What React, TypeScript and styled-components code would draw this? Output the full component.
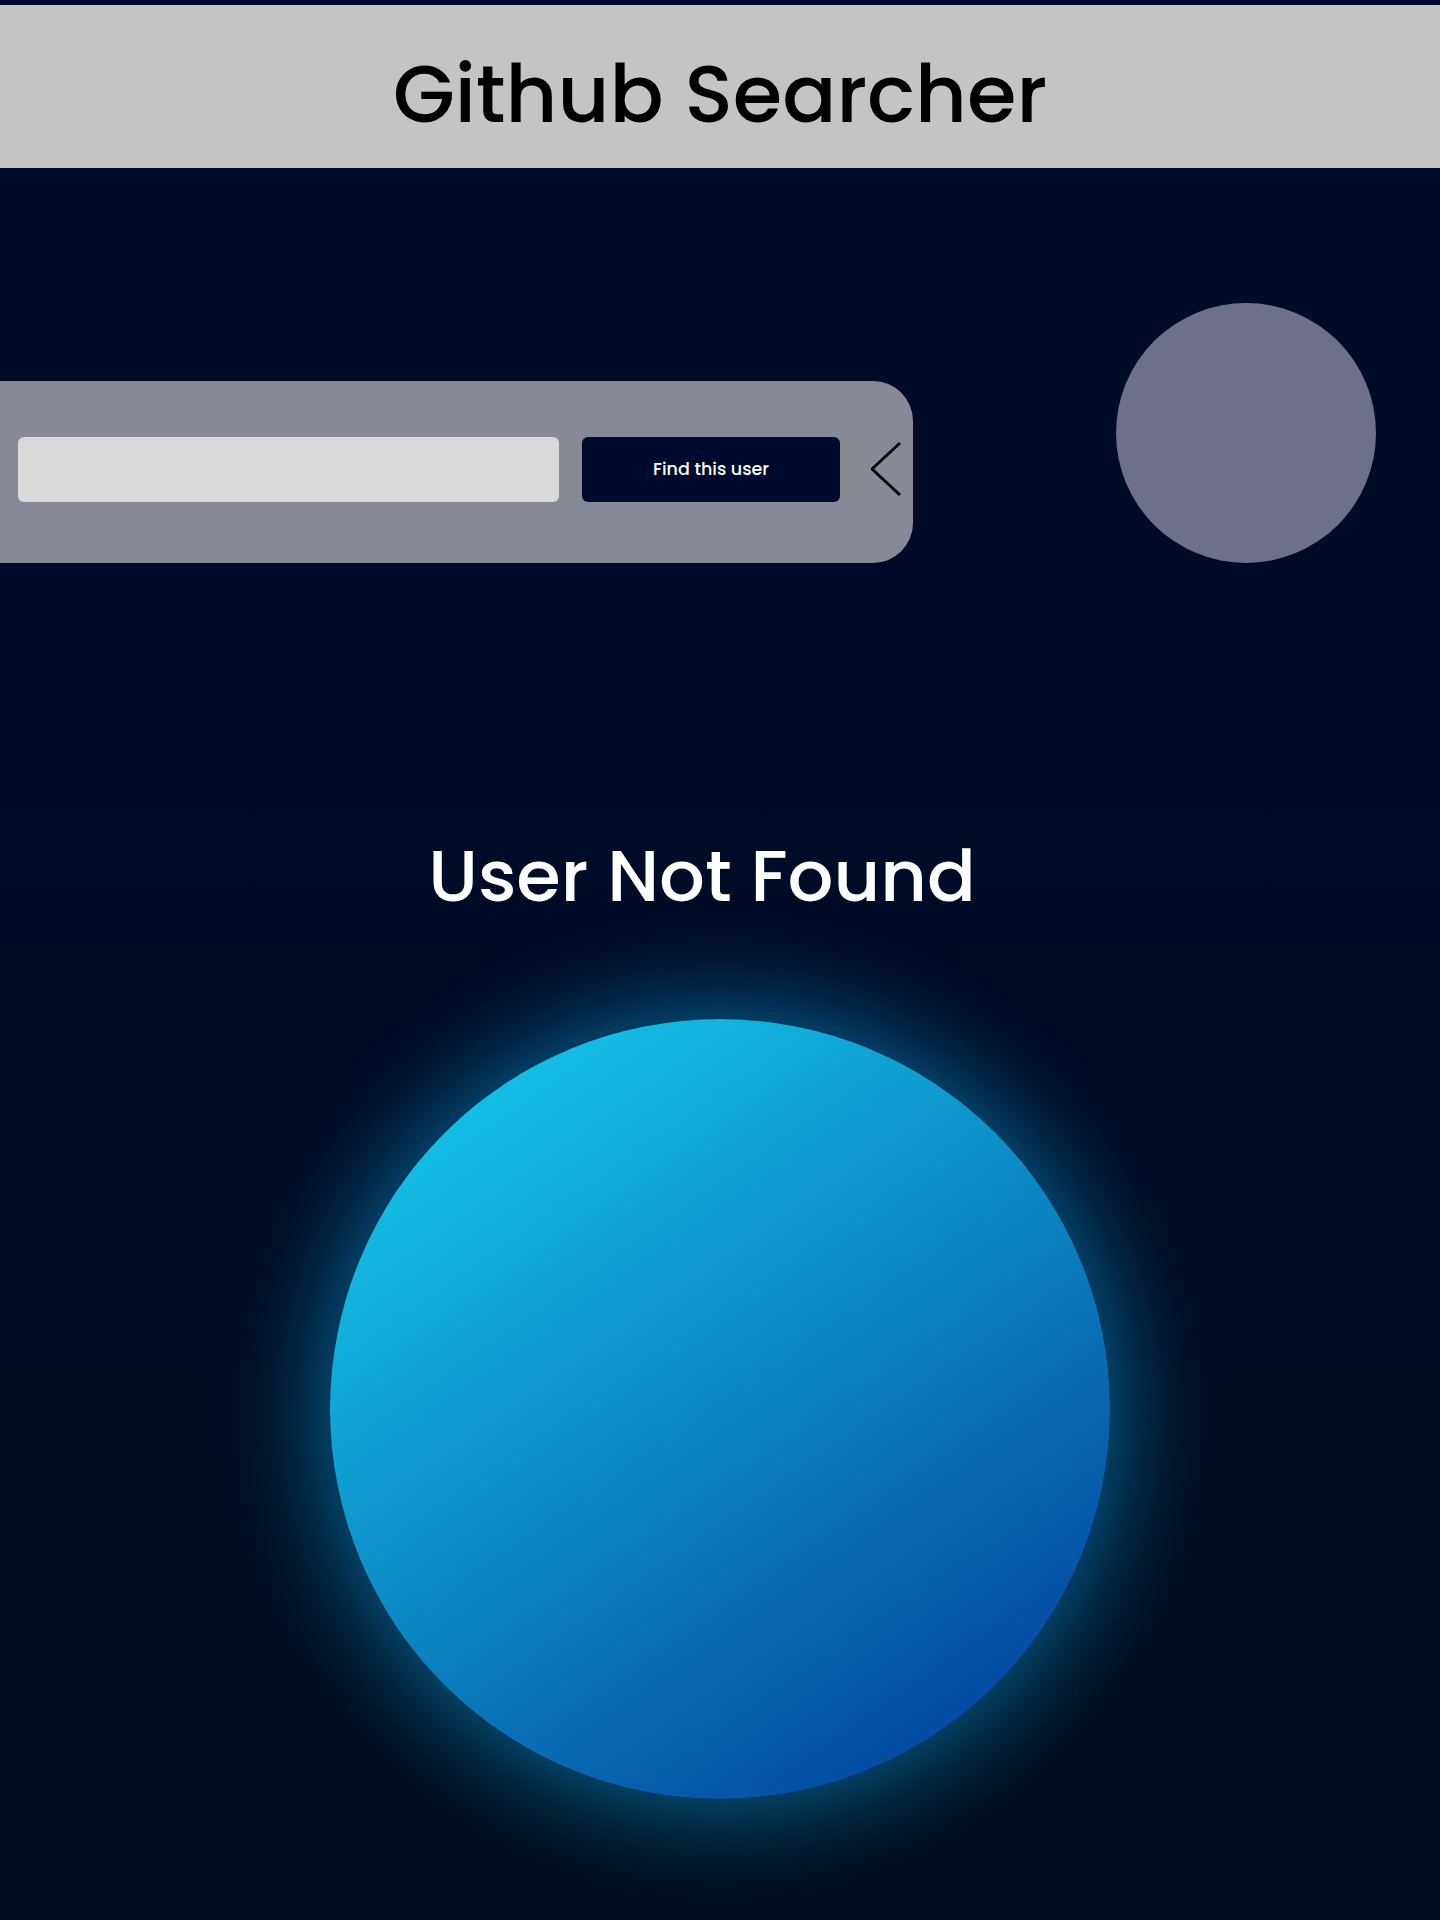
import React from "react";
import styled, { createGlobalStyle } from "styled-components";

const GlobalStyle = createGlobalStyle`
  * { box-sizing: border-box; }
  html, body {
    margin: 0;
    padding: 0;
    background: #000a2b;
  }
  body {
    font-family: "Poppins", "Inter", "Noto Sans", sans-serif;
  }
`;

const Page = styled.div`
  min-height: 1920px;
  padding-top: 5px;
  background: linear-gradient(180deg, #000a2b 0%, #000b28 40%, #011020 100%);
  overflow: hidden;
`;

const Header = styled.header`
  height: 163px;
  background: #c4c4c4;
  display: flex;
  align-items: center;
  justify-content: center;
`;

const Title = styled.h1`
  margin: 0;
  padding-top: 14px;
  font-size: 80px;
  font-weight: 500;
  color: #000;
`;

const SearchRow = styled.section`
  margin-top: 135px;
  display: flex;
  align-items: flex-end;
  justify-content: space-between;
  padding-right: 64px;
`;

const SearchPanel = styled.div`
  width: 913px;
  height: 182px;
  background: #878a96;
  border-radius: 0 40px 40px 0;
  display: flex;
  align-items: center;
  padding: 0 12px 6px 18px;

  & > * { flex-shrink: 0; }
`;

const Input = styled.input`
  width: 541px;
  height: 65px;
  border: none;
  border-radius: 6px;
  background: #d9d9d9;
  outline: none;
  font-size: 18px;
  padding: 0 16px;
`;

const FindButton = styled.button`
  margin-left: 23px;
  width: 258px;
  height: 65px;
  border: none;
  border-radius: 6px;
  background: #000a2e;
  color: #fff;
  font-family: inherit;
  font-size: 17.5px;
  font-weight: 500;
  cursor: pointer;
`;

const Chevron = styled.button`
  margin-left: 31px;
  width: 30px;
  height: 56px;
  padding: 0;
  border: none;
  background: transparent;
  display: flex;
  align-items: center;
  justify-content: center;
  cursor: pointer;
`;

const Avatar = styled.div`
  width: 260px;
  height: 260px;
  border-radius: 50%;
  background: #6e6f8a;
`;

const Result = styled.section`
  display: flex;
  flex-direction: column;
  align-items: center;
`;

const NotFound = styled.h2`
  margin: 270px 0 0 0;
  transform: translateX(-18px);
  font-size: 72px;
  font-weight: 500;
  color: #fff;
  line-height: 1.2;
`;

const Orb = styled.div`
  margin-top: 100px;
  width: 780px;
  height: 780px;
  border-radius: 50%;
  background: linear-gradient(145deg, #16cbec 5%, #0d8fc8 45%, #033c9b 95%);
  box-shadow: 0 0 90px 18px rgba(10, 150, 210, 0.55);
`;

export default function App() {
  return (
    <Page>
      <GlobalStyle />
      <Header>
        <Title>Github Searcher</Title>
      </Header>
      <SearchRow>
        <SearchPanel>
          <Input type="text" aria-label="Github username" />
          <FindButton>Find this user</FindButton>
          <Chevron aria-label="Collapse">
            <svg width="30" height="56" viewBox="0 0 30 56">
              <polyline
                points="29,2 1,28 29,54"
                fill="none"
                stroke="#000"
                strokeWidth="3"
              />
            </svg>
          </Chevron>
        </SearchPanel>
        <Avatar />
      </SearchRow>
      <Result>
        <NotFound>User Not Found</NotFound>
        <Orb />
      </Result>
    </Page>
  );
}
